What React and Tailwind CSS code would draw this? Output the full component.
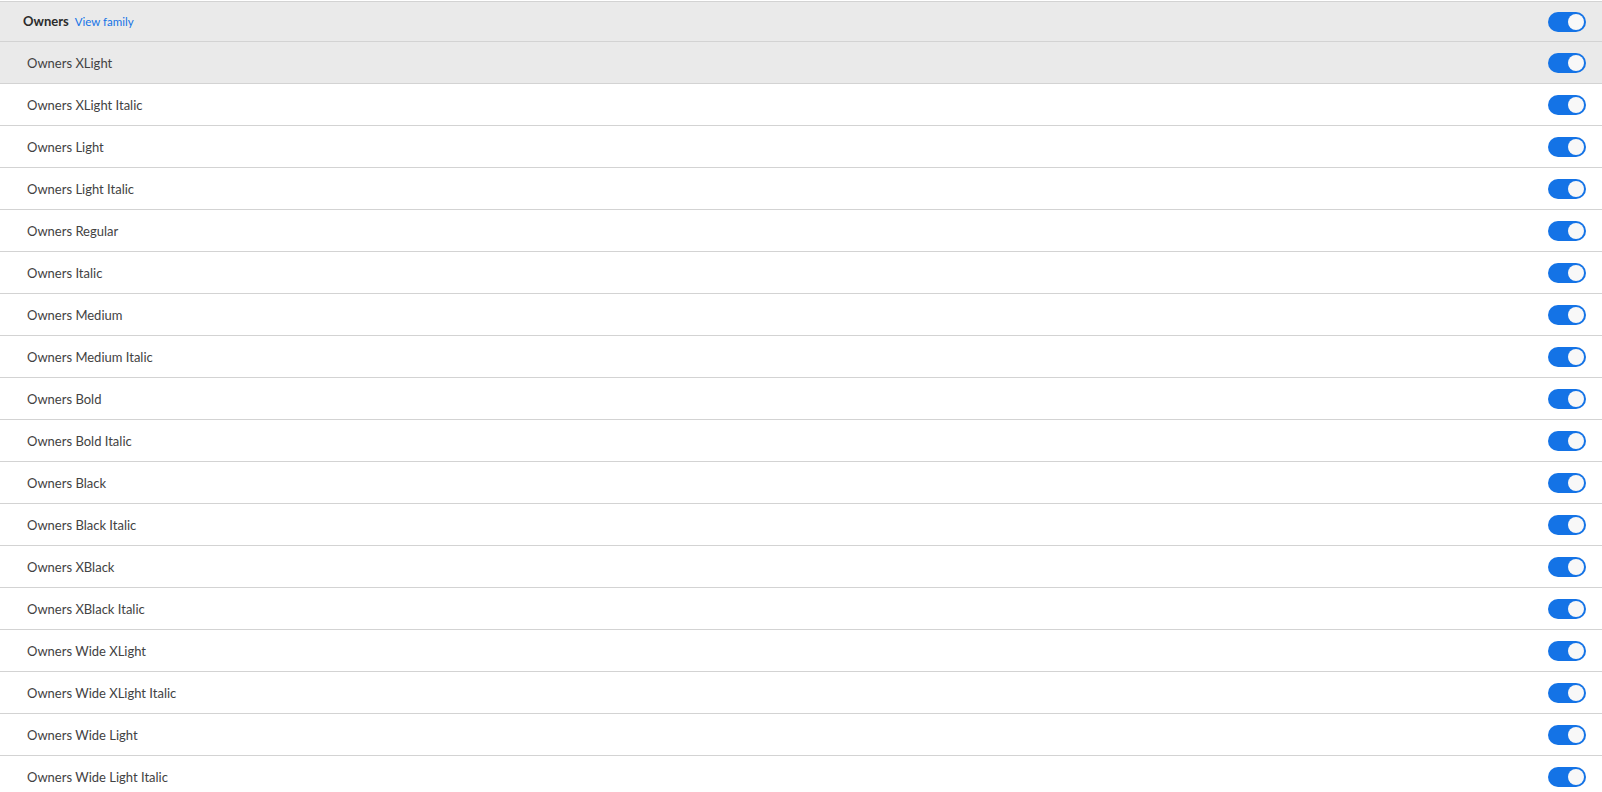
import React from "react";

const styles = [
  "Owners XLight",
  "Owners XLight Italic",
  "Owners Light",
  "Owners Light Italic",
  "Owners Regular",
  "Owners Italic",
  "Owners Medium",
  "Owners Medium Italic",
  "Owners Bold",
  "Owners Bold Italic",
  "Owners Black",
  "Owners Black Italic",
  "Owners XBlack",
  "Owners XBlack Italic",
  "Owners Wide XLight",
  "Owners Wide XLight Italic",
  "Owners Wide Light",
  "Owners Wide Light Italic",
];

const Toggle = () => (
  <div className="relative w-[38px] h-[20px] rounded-full bg-[#1473e6]">
    <div className="absolute right-[2px] top-[2px] w-[16px] h-[16px] rounded-full bg-[#f8f8f8]" />
  </div>
);

const App = () => {
  return (
    <div className="min-h-screen bg-white pt-px" style={{ fontFamily: "Lato, 'Open Sans', sans-serif" }}>
      <div className="h-[41px] flex items-center justify-between bg-[#eaeaea] border-y border-[#d3d3d3] pl-[23px] pr-[16px]">
        <div className="flex items-baseline gap-[6px]">
          <span className="text-[13px] font-bold text-[#2c2c2c]">Owners</span>
          <span className="text-[11.5px] text-[#1473e6]">View family</span>
        </div>
        <Toggle />
      </div>
      {styles.map((name, i) => (
        <div
          key={name}
          className={
            i === 0
              ? "h-[42px] flex items-center justify-between bg-[#eaeaea] border-b border-[#d3d3d3] pl-[27px] pr-[16px]"
              : "h-[42px] flex items-center justify-between bg-white border-b border-[#d3d3d3] pl-[27px] pr-[16px]"
          }
        >
          <span className="pt-[2px] text-[13px] text-[#424242]">{name}</span>
          <Toggle />
        </div>
      ))}
    </div>
  );
};

export default App;
